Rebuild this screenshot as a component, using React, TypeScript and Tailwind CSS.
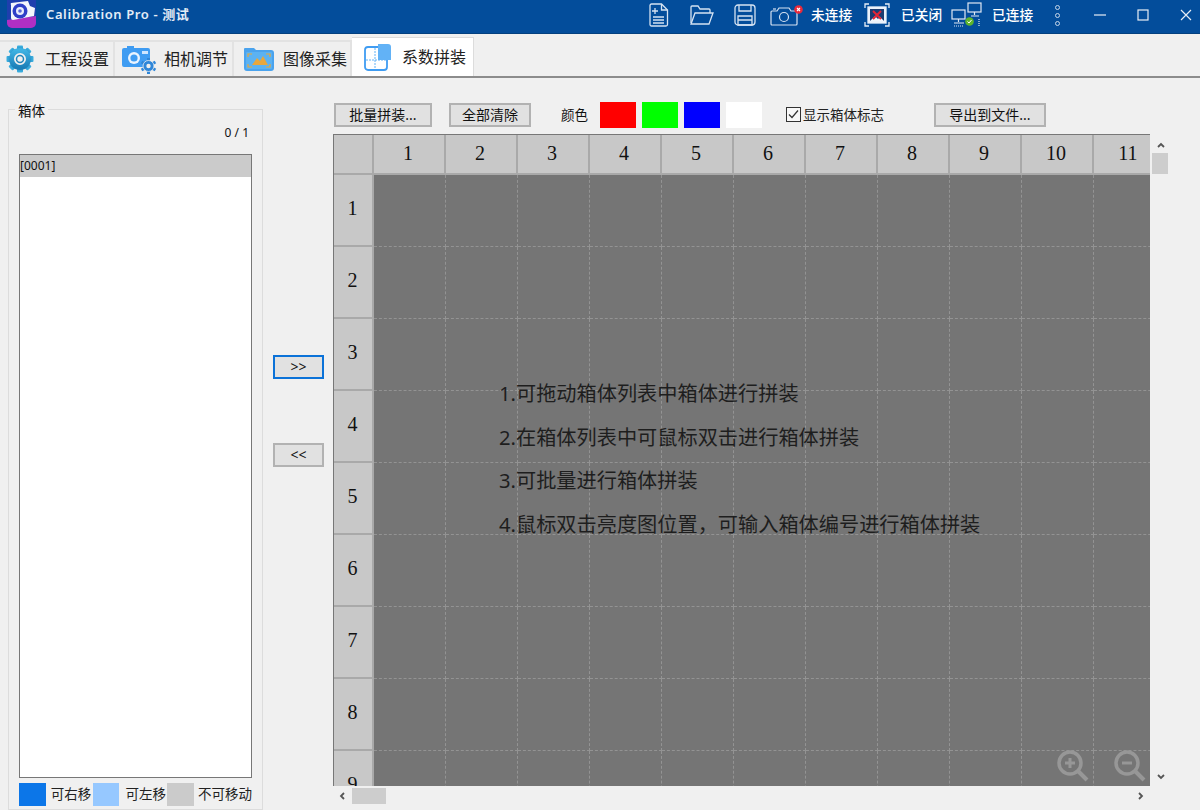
import React from "react";

const SANS = "font-['Noto_Sans','Noto_Sans_CJK_SC',sans-serif]";
const cols = [1, 2, 3, 4, 5, 6, 7, 8, 9, 10, 11];
const rows = [1, 2, 3, 4, 5, 6, 7, 8, 9];

function Btn({ w, children, className = "", focus }: { w: string; children: React.ReactNode; className?: string; focus?: boolean }) {
  return (
    <button className={`${w} h-[24px] flex items-center justify-center bg-[#e1e1e1] border-2 ${focus ? "border-[#0b72d8]" : "border-[#b2b2b2]"} text-[14px] text-[#111] leading-none ${className}`}>
      {children}
    </button>
  );
}

function Gear() {
  return (
    <svg width="30" height="30" viewBox="0 0 30 30" className="shrink-0">
      <defs>
        <linearGradient id="g1" x1="0" y1="0" x2="0" y2="1">
          <stop offset="0" stopColor="#3eb2e2" />
          <stop offset="1" stopColor="#1b7fb8" />
        </linearGradient>
      </defs>
      <g fill="url(#g1)">
        {[0, 45, 90, 135, 180, 225, 270, 315].map((a) => (
          <rect key={a} x="12" y="1.500" width="6" height="7" rx="1" transform={`rotate(${a} 15 15)`} />
        ))}
      </g>
      <circle cx="15" cy="15" r="8.500" fill="none" stroke="url(#g1)" strokeWidth="5" />
      <circle cx="15" cy="15" r="3.500" fill="#eee" stroke="#1f86bd" strokeWidth="1.500" />
    </svg>
  );
}

function CamTab() {
  return (
    <svg width="36" height="30" viewBox="0 0 36 30" className="shrink-0">
      <path d="M1 6a2 2 0 0 1 2-2h3V2h7v2h14a2 2 0 0 1 2 2v15a2 2 0 0 1-2 2H3a2 2 0 0 1-2-2z" fill="#3f9cf2" />
      <circle cx="13" cy="14" r="6" fill="#eaf4ff" />
      <circle cx="13" cy="14" r="3.600" fill="#3f9cf2" />
      <rect x="21" y="7" width="6" height="3" fill="#cfe6ff" />
      <g fill="#2f86d8">
        {[0, 60, 120, 180, 240, 300].map((a) => (
          <rect key={a} x="26" y="14" width="3" height="4" transform={`rotate(${a} 27.500 22)`} />
        ))}
      </g>
      <circle cx="27.500" cy="22" r="5.500" fill="#2f86d8" stroke="#eee" strokeWidth="0.800" />
      <circle cx="27.500" cy="22" r="2.200" fill="#eee" />
    </svg>
  );
}

function ImgTab() {
  return (
    <svg width="32" height="26" viewBox="0 0 32 26" className="shrink-0">
      <path d="M1 6V3a1 1 0 0 1 1-1h9l2 2h15a3 3 0 0 1 3 3v15a3 3 0 0 1-3 3H4a3 3 0 0 1-3-3z" fill="#4aa3ee" />
      <rect x="3" y="6" width="26" height="17" rx="1" fill="#5bb2f2" />
      <path d="M9 19l5-7 3 3 3-5 5 9z" fill="#e8a73c" />
      <path d="M5 11V8h4M23 8h4v3M27 18v3h-4M9 21H5v-3" stroke="#e8a73c" strokeWidth="1.200" fill="none" />
    </svg>
  );
}

function SplitTab() {
  return (
    <svg width="28" height="28" viewBox="0 0 28 28" className="shrink-0">
      <rect x="1" y="4" width="22" height="23" rx="3" fill="#fff" stroke="#3f9cf2" strokeWidth="1.800" />
      <path d="M14 1h10a3 3 0 0 1 3 3v13H14z" fill="#62b2f6" />
      <path d="M11 5v21M2 17h20" stroke="#62b2f6" strokeWidth="1" strokeDasharray="2 1" />
    </svg>
  );
}

function Tab({ icon, label, w, gap }: { icon: React.ReactNode; label: string; w: string; gap: string }) {
  return (
    <div className={`${w} h-[36px] flex items-center border-r-2 border-t-2 border-[#e2e2e2] bg-[#efefef] text-[16px] text-[#222] ${gap}`}>
      {icon}
      <span className="whitespace-nowrap">{label}</span>
    </div>
  );
}

function TopIcons() {
  const s = "#d5e2f2";
  return (
    <>
      <svg width="22" height="24" viewBox="0 0 22 24" fill="none" stroke={s} strokeWidth="1.300">
        <path d="M2 2.500a1.500 1.500 0 0 1 1.500-1.500h10l6 6v14.500a1.500 1.500 0 0 1-1.500 1.500h-14.500a1.500 1.500 0 0 1-1.500-1.500z" />
        <path d="M13.500 1v6h6M7 5v6M4 8h6M5 14h11M5 17h11M5 20h11" />
      </svg>
      <svg width="26" height="22" viewBox="0 0 26 22" className="ml-[19px]" fill="none" stroke={s} strokeWidth="1.300">
        <path d="M2 19V3a1 1 0 0 1 1-1h6l2 3h9a1 1 0 0 1 1 1v3" />
        <path d="M2 20l4-11h18l-4 11z" />
      </svg>
      <svg width="22" height="22" viewBox="0 0 22 22" className="ml-[19px]" fill="none" stroke={s} strokeWidth="1.300">
        <rect x="1" y="1" width="20" height="20" rx="3" />
        <path d="M5 1v6h12V1M4 12h14v9H4zM4 16h14" />
      </svg>
      <div className="relative ml-[14px] w-[32px] h-[24px]">
        <svg width="30" height="20" viewBox="0 0 30 20" className="absolute left-0 top-[3px]" fill="none" stroke={s} strokeWidth="1.200">
          <path d="M1 6a1 1 0 0 1 1-1h5l2-3h10l2 3h5a1 1 0 0 1 1 1v12a1 1 0 0 1-1 1H2a1 1 0 0 1-1-1z" />
          <circle cx="14" cy="11" r="4.500" />
          <path d="M3 3h3" />
        </svg>
        <svg width="9" height="9" viewBox="0 0 9 9" className="absolute right-[-1px] top-[2px]">
          <circle cx="4.500" cy="4.500" r="4.300" fill="#e8293b" />
          <path d="M3 3l3 3M6 3l-3 3" stroke="#fff" strokeWidth="1.100" />
        </svg>
      </div>
      <span className="ml-[9px] text-[13.700px] font-medium text-white w-[42px] whitespace-nowrap">未连接</span>
      <svg width="26" height="24" viewBox="0 0 26 24" className="ml-[11px]" fill="none" stroke="#e6eef8" strokeWidth="1.300">
        <path d="M1 5V1h4M21 1h4v4M25 19v4h-4M5 23H1v-4" />
        <rect x="4" y="4" width="18" height="16" fill="#eaf1fa" stroke="#eaf1fa" />
        <rect x="6" y="6" width="14" height="12" fill="#1b3c72" stroke="none" />
        <path d="M6 18l5-5 3 3 2-2 4 4z" fill="#f0f4fa" stroke="none" />
        <path d="M9 8l8 8M17 8l-8 8" stroke="#e32636" strokeWidth="2" />
      </svg>
      <span className="ml-[11px] text-[13.700px] font-medium text-white w-[42px] whitespace-nowrap">已关闭</span>
      <div className="relative ml-[8px] w-[32px] h-[26px]">
        <svg width="32" height="26" viewBox="0 0 32 26" fill="none" stroke="#dfe8f4" strokeWidth="1.200">
          <rect x="1" y="8" width="13" height="9" />
          <path d="M7.500 17v3M3 21h10" />
          <rect x="17" y="1" width="13" height="9" />
          <path d="M23.500 10v3M20 14h8" />
          <path d="M3 24h10M28 17v7" strokeDasharray="1 1" />
        </svg>
        <svg width="9" height="9" viewBox="0 0 9 9" className="absolute left-[14px] top-[15px]">
          <circle cx="4.500" cy="4.500" r="4.300" fill="#5db52c" />
          <path d="M2.500 4.500l1.500 1.500 2.500-3" stroke="#fff" strokeWidth="1" fill="none" />
        </svg>
      </div>
      <span className="ml-[9px] text-[13.700px] font-medium text-white w-[42px] whitespace-nowrap">已连接</span>
      <div className="ml-[21px] flex flex-col gap-[3px] w-[5px]">
        <span className="w-[5px] h-[5px] rounded-full border border-[#c5d5e8]" />
        <span className="w-[5px] h-[5px] rounded-full border border-[#c5d5e8]" />
        <span className="w-[5px] h-[5px] rounded-full border border-[#c5d5e8]" />
      </div>
      <svg width="12" height="12" viewBox="0 0 12 12" className="ml-[34px]" stroke="#e8eef6" strokeWidth="1.200">
        <path d="M0 6h12" />
      </svg>
      <svg width="12" height="12" viewBox="0 0 12 12" className="ml-[31px]" fill="none" stroke="#e8eef6" strokeWidth="1.200">
        <rect x="1" y="1" width="10" height="10" />
      </svg>
      <svg width="12" height="12" viewBox="0 0 12 12" className="ml-[31px] mr-[8px]" stroke="#e8eef6" strokeWidth="1.200">
        <path d="M1 1l10 10M11 1L1 11" />
      </svg>
    </>
  );
}

function Chev({ d, className = "" }: { d: string; className?: string }) {
  return (
    <svg width="10" height="10" viewBox="0 0 10 10" className={className} fill="none" stroke="#555" strokeWidth="1.800">
      <path d={d} />
    </svg>
  );
}

function Zoom({ minus }: { minus?: boolean }) {
  return (
    <svg width="34" height="34" viewBox="0 0 34 34" fill="none" stroke="#979797" strokeWidth="3.500">
      <circle cx="14" cy="14" r="11" />
      <path d="M22 22l9 9" strokeWidth="4" />
      <path d={minus ? "M9 14h10" : "M9 14h10M14 9v10"} strokeWidth="3" />
    </svg>
  );
}

export default function App() {
  return (
    <div className={`w-[1200px] h-[810px] overflow-hidden bg-[#f0f0f0] flex flex-col ${SANS}`}>
      <header className="h-[34px] shrink-0 bg-[#034d9b] border-b border-[#03407f] pb-[3px] flex items-center">
        <svg width="30" height="28" viewBox="0 0 30 28" className="ml-[7px] shrink-0 -mt-[2px]">
          <path d="M0 0h29v23a5 5 0 0 1-5 5H5a5 5 0 0 1-5-5z" fill="#1e3fae" />
          <path d="M0 20l29-4v7a5 5 0 0 1-5 5H5a5 5 0 0 1-5-5z" fill="#b02fc4" />
          <path d="M4 3l17-2 2 5 5 2-1 8-21 4a2 2 0 0 1-2-2V5a2 2 0 0 1 0-2z" fill="#f4f6fc" />
          <circle cx="13" cy="11" r="7.500" fill="#2f3fc8" />
          <circle cx="13" cy="11" r="4" fill="#e8ecfb" />
          <circle cx="13" cy="11" r="1.800" fill="#5a68d8" />
        </svg>
        <span className="ml-[9px] text-[13px] font-semibold tracking-[0.6px] text-[#e4ecf6] whitespace-nowrap">Calibration Pro - 测试</span>
        <div className="flex-1" />
        <TopIcons />
      </header>

      <nav className="h-[44px] shrink-0 flex items-end border-b-2 border-[#8c8c8c] bg-[#f0f0f0]">
        <Tab icon={<Gear />} label="工程设置" w="w-[115px] pl-[5px]" gap="gap-[10px]" />
        <Tab icon={<CamTab />} label="相机调节" w="w-[119px] pl-[6px]" gap="gap-[7px]" />
        <Tab icon={<ImgTab />} label="图像采集" w="w-[118px] pl-[9px]" gap="gap-[8px]" />
        <div className="w-[122px] h-[39px] flex items-center gap-[10px] pl-[12px] bg-white border-t border-r border-[#dcdcdc] text-[16px] text-[#222]">
          <SplitTab />
          <span className="whitespace-nowrap">系数拼装</span>
        </div>
      </nav>

      <main className="flex-1 flex min-h-0">
        <section className="relative w-[255px] ml-[8px] mt-[31px] border border-[#dcdcdc] h-[701px] shrink-0 px-[10px] flex flex-col">
          <span className="absolute left-[6px] -top-[8px] px-[3px] bg-[#f0f0f0] text-[13.500px] leading-[18px] text-[#111]">箱体</span>
          <div className="h-[44px] flex items-start justify-end pt-[14px] pr-[3px] text-[12px] leading-[18px] text-[#111]">0 / 1</div>
          <div className="h-[624px] w-[233px] bg-white border border-[#777] shrink-0">
            <div className="h-[22px] bg-[#cbcbcb] text-[12px] leading-[22px] text-[#111]">[0001]</div>
          </div>
          <div className="flex items-center mt-[5px] text-[13.500px] leading-none text-[#222] whitespace-nowrap">
            <span className="w-[27px] h-[23px] bg-[#0c76e8]" />
            <span className="ml-[5px] w-[42px]">可右移</span>
            <span className="w-[27px] h-[23px] bg-[#96c8ff]" />
            <span className="ml-[6px] w-[42px]">可左移</span>
            <span className="w-[27px] h-[23px] bg-[#cbcbcb]" />
            <span className="ml-[4px]">不可移动</span>
          </div>
        </section>

        <div className="w-[51px] ml-[10px] shrink-0 pt-[277px] flex flex-col">
          <Btn w="w-[51px]" focus>&gt;&gt;</Btn>
          <Btn w="w-[51px]" className="mt-[64px]">&lt;&lt;</Btn>
        </div>

        <div className="ml-[9px] flex-1 min-w-0 flex flex-col">
          <div className="h-[56px] pt-[18px] shrink-0 flex items-center">
            <Btn w="w-[98px]" className="ml-[1px]">批量拼装...</Btn>
            <Btn w="w-[82px]" className="ml-[17px]">全部清除</Btn>
            <span className="ml-[30px] text-[13.500px] text-[#111]">颜色</span>
            <span className="ml-[12px] w-[36px] h-[26px] bg-[#ff0000]" />
            <span className="ml-[6px] w-[36px] h-[26px] bg-[#00ff00]" />
            <span className="ml-[6px] w-[36px] h-[26px] bg-[#0000ff]" />
            <span className="ml-[6px] w-[36px] h-[26px] bg-white" />
            <svg width="16" height="16" viewBox="0 0 16 16" className="ml-[24px]" fill="none">
              <rect x="0.500" y="0.500" width="14" height="14" fill="#f8f8f8" stroke="#333" />
              <path d="M3 7.500l3 3 6-7" stroke="#333" strokeWidth="1.200" />
            </svg>
            <span className="ml-[1px] w-[131px] text-[13.500px] text-[#222] whitespace-nowrap">显示箱体标志</span>
            <Btn w="w-[112px]">导出到文件...</Btn>
          </div>

          <div className="flex-1 min-h-0 flex">
            <div className="relative w-[817px] h-[652px] shrink-0 overflow-hidden border-t border-l border-[#777] bg-[#757575]">
              <div className="grid grid-cols-[40px_repeat(11,72px)] grid-rows-[40px_repeat(9,72px)] font-['Liberation_Serif',serif] text-[20px] text-[#111]">
                <div className="bg-[#c8c8c8] border-r-2 border-b-2 border-[#a9a9a9]" />
                {cols.map((c) => (
                  <div key={c} className="bg-[#c8c8c8] border-r-2 border-b-2 border-[#a9a9a9] pr-[2px] pb-[2px] flex items-center justify-center">{c}</div>
                ))}
                {rows.map((r) => (
                  <React.Fragment key={r}>
                    <div className="bg-[#c8c8c8] border-r-2 border-b-2 border-[#a9a9a9] pr-[1px] pb-[4px] flex items-center justify-center">{r}</div>
                    {cols.map((c) => (
                      <div key={c} className="bg-[#757575] border-r border-b border-dashed border-[#939393]" />
                    ))}
                  </React.Fragment>
                ))}
              </div>
              <div className={`absolute left-[165px] top-[237px] text-[20.200px] leading-[43.500px] text-[#1e1e1e] whitespace-nowrap ${SANS}`}>
                <p>1.可拖动箱体列表中箱体进行拼装</p>
                <p>2.在箱体列表中可鼠标双击进行箱体拼装</p>
                <p>3.可批量进行箱体拼装</p>
                <p>4.鼠标双击亮度图位置，可输入箱体编号进行箱体拼装</p>
              </div>
              <div className="absolute right-[3px] bottom-[3px] flex gap-[23px]">
                <Zoom />
                <Zoom minus />
              </div>
            </div>
            <div className="w-[18px] ml-[2px] h-[652px] relative">
              <Chev d="M2 7l3-3 3 3" className="absolute left-[4px] top-[6px]" />
              <div className="absolute left-0 top-[19px] w-[16px] h-[21px] bg-[#cdcdcd]" />
              <Chev d="M2 3l3 3 3-3" className="absolute left-[4px] top-[638px]" />
            </div>
          </div>

          <div className="h-[24px] w-[817px] shrink-0 relative">
            <Chev d="M7 2L4 5l3 3" className="absolute left-[4px] top-[5px]" />
            <div className="absolute left-[19px] top-[2px] w-[34px] h-[16px] bg-[#cdcdcd]" />
            <Chev d="M3 2l3 3-3 3" className="absolute left-[803px] top-[5px]" />
          </div>
        </div>
      </main>
    </div>
  );
}
